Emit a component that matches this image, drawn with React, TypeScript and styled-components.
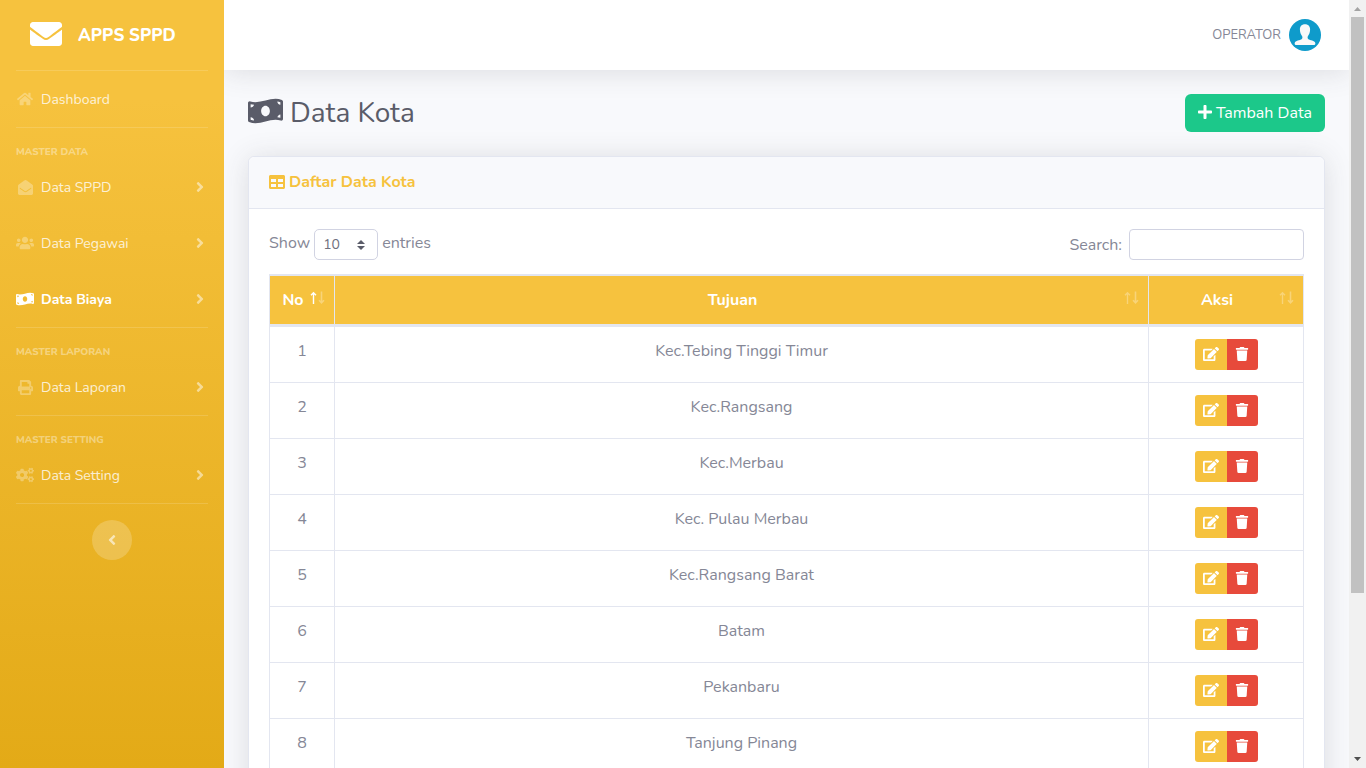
import React from "react";
import styled, { createGlobalStyle } from "styled-components";
import {
  FaAngleLeft,
  FaAngleRight,
  FaCogs,
  FaEdit,
  FaEnvelope,
  FaEnvelopeOpen,
  FaHome,
  FaMoneyBillWave,
  FaPlus,
  FaPrint,
  FaTable,
  FaTrash,
  FaUsers,
} from "react-icons/fa";

const color = {
  warning: "#f6c23e",
  success: "#1cc88a",
  danger: "#e74a3b",
  text: "#858796",
  heading: "#5a5c69",
  surface: "#f8f9fc",
  border: "#e3e6f0",
  inputBorder: "#d1d3e2",
};

const shadow = "0 2px 28px 0 rgba(58, 59, 69, 0.15)";

const GlobalStyle = createGlobalStyle`
  *, *::before, *::after { box-sizing: border-box; }
  body {
    margin: 0;
    background: ${color.surface};
    color: ${color.text};
    font-family: Nunito, Lato, "Open Sans", sans-serif;
    font-size: 16px;
    line-height: 24px;
  }
  button, input, select { font: inherit; }
  svg { display: block; flex: none; }
`;

const Shell = styled.div`
  display: flex;
  height: 100vh;
  overflow: hidden;
`;

const Sidebar = styled.nav`
  flex: 0 0 224px;
  background: linear-gradient(180deg, #f6c23e 13%, #e3aa17 100%);
`;

const Brand = styled.a`
  display: flex;
  align-items: center;
  gap: 16px;
  height: 70px;
  padding: 0 30px;
  color: #fff;
  font-size: 17px;
  font-weight: 800;
  line-height: 25px;
  text-decoration: none;
  text-transform: uppercase;

  svg { margin-bottom: 2px; }
`;

const Divider = styled.hr<{ $spaced?: boolean }>`
  height: 1px;
  margin: 0 16px ${(p) => (p.$spaced ? "16px" : "0")};
  border: 0;
  background: rgba(255, 255, 255, 0.15);
`;

const MenuHeading = styled.div`
  padding: 1px 16px 0;
  color: rgba(255, 255, 255, 0.4);
  font-size: 10px;
  font-weight: 800;
  line-height: 14px;
  text-transform: uppercase;
`;

const MenuLink = styled.a<{ $active?: boolean }>`
  display: flex;
  align-items: center;
  height: 56px;
  padding: 0 16px;
  color: ${(p) => (p.$active ? "#fff" : "rgba(255, 255, 255, 0.8)")};
  font-size: 14px;
  font-weight: ${(p) => (p.$active ? 700 : 400)};
  line-height: 21px;
  text-decoration: none;
`;

const MenuIcon = styled.span<{ $active?: boolean }>`
  display: flex;
  justify-content: center;
  width: 18px;
  margin-right: 7px;
  color: ${(p) => (p.$active ? "#fff" : "rgba(255, 255, 255, 0.3)")};
  font-size: 15px;
`;

const MenuArrow = styled.span`
  margin-left: auto;
  color: rgba(255, 255, 255, 0.5);
  font-size: 16px;
`;

const CollapseButton = styled.button`
  display: flex;
  align-items: center;
  justify-content: center;
  width: 40px;
  height: 40px;
  margin: 0 auto;
  padding: 0;
  border: 0;
  border-radius: 50%;
  background: rgba(255, 255, 255, 0.2);
  color: rgba(255, 255, 255, 0.6);
`;

const Main = styled.div`
  flex: 1;
  min-width: 0;
  overflow: hidden;
`;

const Topbar = styled.header`
  display: flex;
  align-items: center;
  justify-content: flex-end;
  height: 70px;
  margin-bottom: 24px;
  padding: 0 28px;
  background: #fff;
  box-shadow: ${shadow};
`;

const UserLink = styled.a`
  display: flex;
  align-items: center;
  gap: 8px;
  color: ${color.text};
  font-size: 13px;
  text-decoration: none;
`;

const Content = styled.main`
  padding: 0 24px 24px;
`;

const PageHead = styled.div`
  display: flex;
  align-items: center;
  justify-content: space-between;
  margin-bottom: 24px;
`;

const PageTitle = styled.h1`
  display: flex;
  align-items: center;
  gap: 7px;
  margin: 0;
  color: ${color.heading};
  font-size: 28px;
  font-weight: 400;
  line-height: 34px;

  svg {
    width: 35px;
    height: 28px;
    margin-bottom: 4px;
  }
`;

const AddButton = styled.button`
  display: flex;
  align-items: center;
  gap: 4px;
  height: 38px;
  padding: 0 13px;
  border: 0;
  border-radius: 6px;
  background: ${color.success};
  color: #fff;

  svg {
    width: 14px;
    height: 16px;
    margin-bottom: 2px;
  }
`;

const Card = styled.section`
  border: 1px solid ${color.border};
  border-radius: 6px;
  background: #fff;
  box-shadow: ${shadow};
`;

const CardTitle = styled.h2`
  display: flex;
  align-items: center;
  gap: 4px;
  margin: 0;
  padding: 16px 20px;
  border-bottom: 1px solid ${color.border};
  border-radius: 6px 6px 0 0;
  background: ${color.surface};
  color: ${color.warning};
  font-size: 16px;
  font-weight: 700;
  line-height: 19px;

  svg { margin-bottom: 2px; }
`;

const CardBody = styled.div`
  padding: 20px;
`;

const TableTools = styled.div`
  display: flex;
  justify-content: space-between;
  margin-bottom: 14px;
`;

const LengthLabel = styled.label`
  display: flex;
  gap: 4px;
  line-height: 28px;
`;

const SearchLabel = styled.label`
  display: flex;
  align-items: center;
  gap: 7px;
`;

const SelectBox = styled.span`
  position: relative;
  display: block;

  svg {
    position: absolute;
    top: 11px;
    right: 13px;
    pointer-events: none;
  }
`;

const LengthSelect = styled.select`
  display: block;
  width: 64px;
  height: 31px;
  padding: 0 8px;
  border: 1px solid ${color.inputBorder};
  border-radius: 5px;
  background: #fff;
  color: #6e707e;
  font-size: 14px;
  appearance: none;
`;

const SearchInput = styled.input`
  width: 175px;
  height: 31px;
  padding: 4px 8px;
  border: 1px solid ${color.inputBorder};
  border-radius: 4px;
  background: #fff;
  color: #6e707e;
  font-size: 14px;
`;

const DataTable = styled.table`
  width: 100%;
  border: 1px solid ${color.border};
  border-collapse: separate;
  border-spacing: 0;
  table-layout: fixed;
  text-align: center;
`;

const HeadCell = styled.th<{ $width?: number }>`
  position: relative;
  width: ${(p) => (p.$width ? `${p.$width}px` : "auto")};
  padding: 12px 30px 12px 12px;
  border: solid ${color.border};
  border-width: 1px 1px 2px 0;
  background: ${color.warning};
  color: #fff;
  font-weight: 700;

  &:last-child { border-right-width: 0; }

  svg {
    position: absolute;
    right: 9px;
    bottom: 20px;
  }
`;

const Cell = styled.td`
  padding: 12px;
  border: solid ${color.border};
  border-width: 1px 1px 0 0;
  vertical-align: top;

  &:last-child { border-right-width: 0; }
`;

const ButtonGroup = styled.div`
  display: flex;
  justify-content: center;
`;

const ActionButton = styled.button<{ $kind: "edit" | "delete" }>`
  display: flex;
  align-items: center;
  justify-content: center;
  width: ${(p) => (p.$kind === "edit" ? 32 : 31)}px;
  height: 31px;
  padding: 0 0 2px;
  border: 0;
  border-radius: ${(p) => (p.$kind === "edit" ? "3px 0 0 3px" : "0 3px 3px 0")};
  background: ${(p) => (p.$kind === "edit" ? color.warning : color.danger)};
  color: #fff;
  font-size: ${(p) => (p.$kind === "edit" ? 16 : 14)}px;
`;

const ScrollTrack = styled.div`
  display: flex;
  flex: 0 0 17px;
  flex-direction: column;
  align-items: center;
  background: #f1f1f1;
`;

const ScrollThumb = styled.div`
  width: 13px;
  height: 75%;
  background: #c1c1c1;
`;

const ScrollArrow = styled.svg`
  width: 17px;
  height: 17px;

  &:last-child { margin-top: auto; }
`;

function SortArrows({ active }: { active?: boolean }) {
  return (
    <svg width="16" height="13" viewBox="0 0 16 13" fill="none" stroke="#fff" aria-hidden="true">
      <path d="M4.5 13V2M2 4.2L4.5 1.7L7 4.2" strokeOpacity={active ? 1 : 0.3} strokeWidth="1.4" />
      <path d="M12.5 0.5V11M10 9.3L12.5 11.8L15 9.3" strokeOpacity="0.3" strokeWidth="1.6" />
    </svg>
  );
}

function Avatar() {
  return (
    <svg width="32" height="32" viewBox="0 0 32 32" role="img" aria-label="Operator">
      <circle cx="16" cy="16" r="16" fill="#0f9bcb" />
      <path
        d="M16 5.3c3.3 0 5.2 2.2 5.1 5.5-.1 2.9-1.1 4.8-2.1 6.2-.6.9-.6 2.500.4 3.300 1.500 1.100 6.300 1.200 6.900 3.700.2 1-.1 1.900-1 1.900H6.700c-.9 0-1.200-.9-1-1.900.6-2.500 5.400-2.600 6.900-3.700 1-.8 1-2.400.4-3.300-1-1.400-2-3.300-2.100-6.200C10.800 7.500 12.700 5.300 16 5.300z"
        fill="#f9f9f9"
      />
    </svg>
  );
}

type MenuItem = { label: string; icon: React.ReactNode; active?: boolean };

const menuGroups: { heading: string; items: MenuItem[] }[] = [
  {
    heading: "Master Data",
    items: [
      { label: "Data SPPD", icon: <FaEnvelopeOpen /> },
      { label: "Data Pegawai", icon: <FaUsers size={18} /> },
      { label: "Data Biaya", icon: <FaMoneyBillWave size={18} />, active: true },
    ],
  },
  { heading: "Master Laporan", items: [{ label: "Data Laporan", icon: <FaPrint /> }] },
  { heading: "Master Setting", items: [{ label: "Data Setting", icon: <FaCogs size={18} /> }] },
];

const cities = [
  "Kec.Tebing Tinggi Timur",
  "Kec.Rangsang",
  "Kec.Merbau",
  "Kec. Pulau Merbau",
  "Kec.Rangsang Barat",
  "Batam",
  "Pekanbaru",
  "Tanjung Pinang",
];

export default function App() {
  return (
    <>
      <GlobalStyle />
      <Shell>
        <Sidebar>
          <Brand href="#">
            <FaEnvelope size={32} />
            Apps SPPD
          </Brand>
          <Divider />
          <MenuLink href="#">
            <MenuIcon><FaHome size={16} /></MenuIcon>
            Dashboard
          </MenuLink>
          {menuGroups.map((group) => (
            <React.Fragment key={group.heading}>
              <Divider $spaced />
              <MenuHeading>{group.heading}</MenuHeading>
              {group.items.map((item) => (
                <MenuLink href="#" key={item.label} $active={item.active}>
                  <MenuIcon $active={item.active}>{item.icon}</MenuIcon>
                  {item.label}
                  <MenuArrow><FaAngleRight /></MenuArrow>
                </MenuLink>
              ))}
            </React.Fragment>
          ))}
          <Divider $spaced />
          <CollapseButton type="button" aria-label="Collapse menu">
            <FaAngleLeft size={16} />
          </CollapseButton>
        </Sidebar>

        <Main>
          <Topbar>
            <UserLink href="#">
              OPERATOR
              <Avatar />
            </UserLink>
          </Topbar>
          <Content>
            <PageHead>
              <PageTitle>
                <FaMoneyBillWave />
                Data Kota
              </PageTitle>
              <AddButton type="button">
                <FaPlus />
                Tambah Data
              </AddButton>
            </PageHead>
            <Card>
              <CardTitle>
                <FaTable size={16} />
                Daftar Data Kota
              </CardTitle>
              <CardBody>
                <TableTools>
                  <LengthLabel>
                    Show
                    <SelectBox>
                      <LengthSelect defaultValue="10">
                        <option value="10">10</option>
                      </LengthSelect>
                      <svg width="8" height="10" viewBox="0 0 8 10" fill="#5a5c69" aria-hidden="true">
                        <path d="M4 0L0 4h8zM4 10L0 6h8z" />
                      </svg>
                    </SelectBox>
                    entries
                  </LengthLabel>
                  <SearchLabel>
                    Search:
                    <SearchInput type="search" />
                  </SearchLabel>
                </TableTools>
                <DataTable>
                  <thead>
                    <tr>
                      <HeadCell $width={65}>No<SortArrows active /></HeadCell>
                      <HeadCell>Tujuan<SortArrows /></HeadCell>
                      <HeadCell $width={154}>Aksi<SortArrows /></HeadCell>
                    </tr>
                  </thead>
                  <tbody>
                    {cities.map((city, index) => (
                      <tr key={city}>
                        <Cell>{index + 1}</Cell>
                        <Cell>{city}</Cell>
                        <Cell>
                          <ButtonGroup>
                            <ActionButton type="button" $kind="edit" aria-label={`Edit ${city}`}>
                              <FaEdit />
                            </ActionButton>
                            <ActionButton type="button" $kind="delete" aria-label={`Delete ${city}`}>
                              <FaTrash />
                            </ActionButton>
                          </ButtonGroup>
                        </Cell>
                      </tr>
                    ))}
                  </tbody>
                </DataTable>
              </CardBody>
            </Card>
          </Content>
        </Main>

        <ScrollTrack aria-hidden="true">
          <ScrollArrow viewBox="0 0 17 17">
            <path d="M5 11L8.500 7L12 11z" fill="#a3a3a3" />
          </ScrollArrow>
          <ScrollThumb />
          <ScrollArrow viewBox="0 0 17 17">
            <path d="M5 6L8.500 10L12 6z" fill="#505050" />
          </ScrollArrow>
        </ScrollTrack>
      </Shell>
    </>
  );
}
